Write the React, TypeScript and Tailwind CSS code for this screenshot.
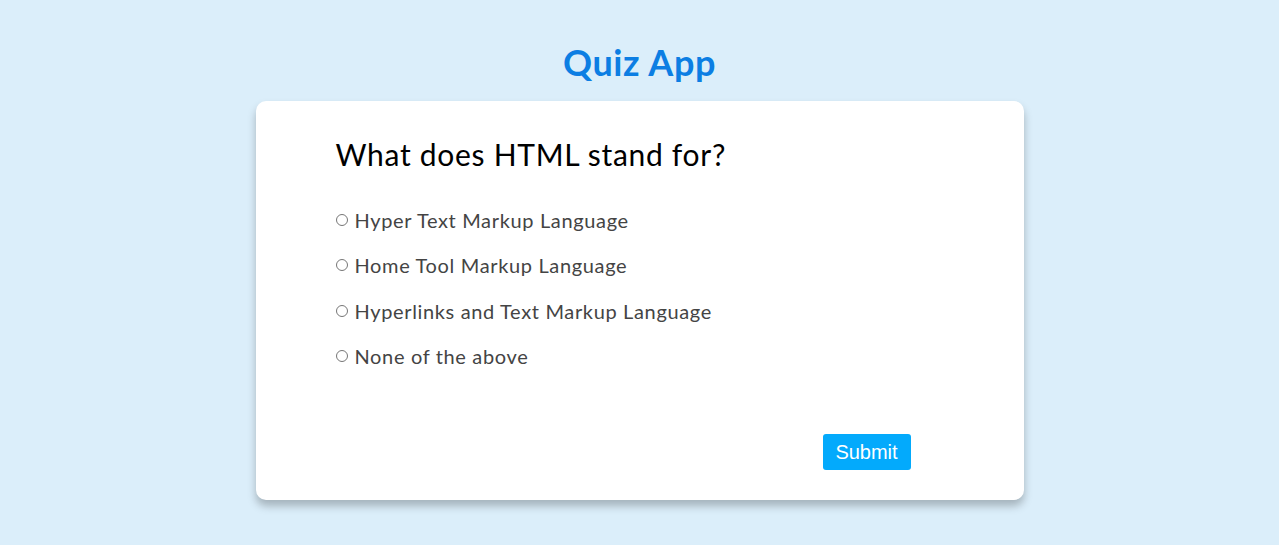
import { useState } from "react";

const options = [
  "Hyper Text Markup Language",
  "Home Tool Markup Language",
  "Hyperlinks and Text Markup Language",
  "None of the above",
];

export default function App() {
  const [picked, setPicked] = useState<number | null>(null);

  return (
    <div className="min-h-screen bg-[#dbeefa] flex flex-col items-center pt-[40px] font-['Lato',sans-serif]">
      <h1 className="text-[36px] leading-[44px] font-bold tracking-[0.6px] text-[#0c7ee3] mb-[17px]">Quiz App</h1>
      <div className="w-[768px] h-[399px] bg-white rounded-[10px] shadow-[0_6px_8px_rgba(0,0,0,0.25)] flex flex-col px-[80px] pt-[35px]">
        <h2 className="text-[30px] leading-[36px] tracking-[0.7px] text-black">What does HTML stand for?</h2>
        <ul className="mt-[35px] flex flex-col gap-[20.5px]">
          {options.map((o, i) => (
            <li key={o} onClick={() => setPicked(i)} className="flex items-center gap-[7px] cursor-pointer h-[25px]">
              <span className="w-[12px] h-[12px] rounded-full border border-[#767676] flex items-center justify-center">
                {picked === i && <span className="w-[6px] h-[6px] rounded-full bg-[#0075ff]" />}
              </span>
              <span className="text-[20px] tracking-[0.65px] text-[#444]">{o}</span>
            </li>
          ))}
        </ul>
        <div className="flex justify-end mt-auto mb-[30px] pr-[33px]">
          <button className="bg-[#03aafc] text-white text-[20px] font-['Liberation_Sans',sans-serif] w-[88px] h-[36px] rounded-[3px]">
            Submit
          </button>
        </div>
      </div>
    </div>
  );
}
